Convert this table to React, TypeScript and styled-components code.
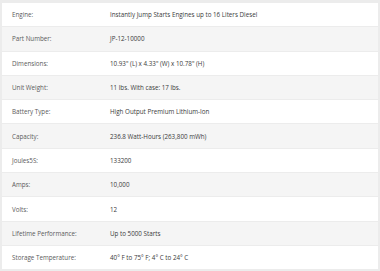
import styled, { createGlobalStyle } from "styled-components";

const GlobalStyle = createGlobalStyle`
  html, body {
    margin: 0;
    padding: 0;
    background: #ffffff;
  }
`;

const specs: [string, string][] = [
  ["Engine:", "Instantly Jump Starts Engines up to 16 Liters Diesel"],
  ["Part Number:", "JP-12-10000"],
  ["Dimensions:", "10.93\" (L) x 4.33\" (W) x 10.78\" (H)"],
  ["Unit Weight:", "11 lbs. With case: 17 lbs."],
  ["Battery Type:", "High Output Premium Lithium-Ion"],
  ["Capacity:", "236.8 Watt-Hours (263,800 mWh)"],
  ["Joules5S:", "133200"],
  ["Amps:", "10,000"],
  ["Volts:", "12"],
  ["Lifetime Performance:", "Up to 5000 Starts"],
  ["Storage Temperature:", "40° F to 75° F; 4° C to 24° C"],
];

const SpecTable = styled.div`
  display: flex;
  flex-direction: column;
  gap: 1px;
  padding: 3px 2px 2px 2px;
  background: #ececec;
  font-family: "Open Sans", "Noto Sans", sans-serif;
  font-size: 6.25px;
  opacity: 0.999;
`;

const Row = styled.div<{ $shaded: boolean }>`
  display: grid;
  grid-template-columns: 108px 1fr;
  align-items: center;
  height: 23.3px;
  background: ${(p) => (p.$shaded ? "#f5f5f5" : "#ffffff")};
`;

const Label = styled.span`
  padding-left: 10px;
  color: #5a5a5a;
`;

const Value = styled.span`
  color: #3a3a3a;
`;

export default function App() {
  return (
    <>
      <GlobalStyle />
      <SpecTable>
        {specs.map(([label, value], i) => (
          <Row key={label} $shaded={i % 2 === 1}>
            <Label>{label}</Label>
            <Value>{value}</Value>
          </Row>
        ))}
      </SpecTable>
    </>
  );
}
